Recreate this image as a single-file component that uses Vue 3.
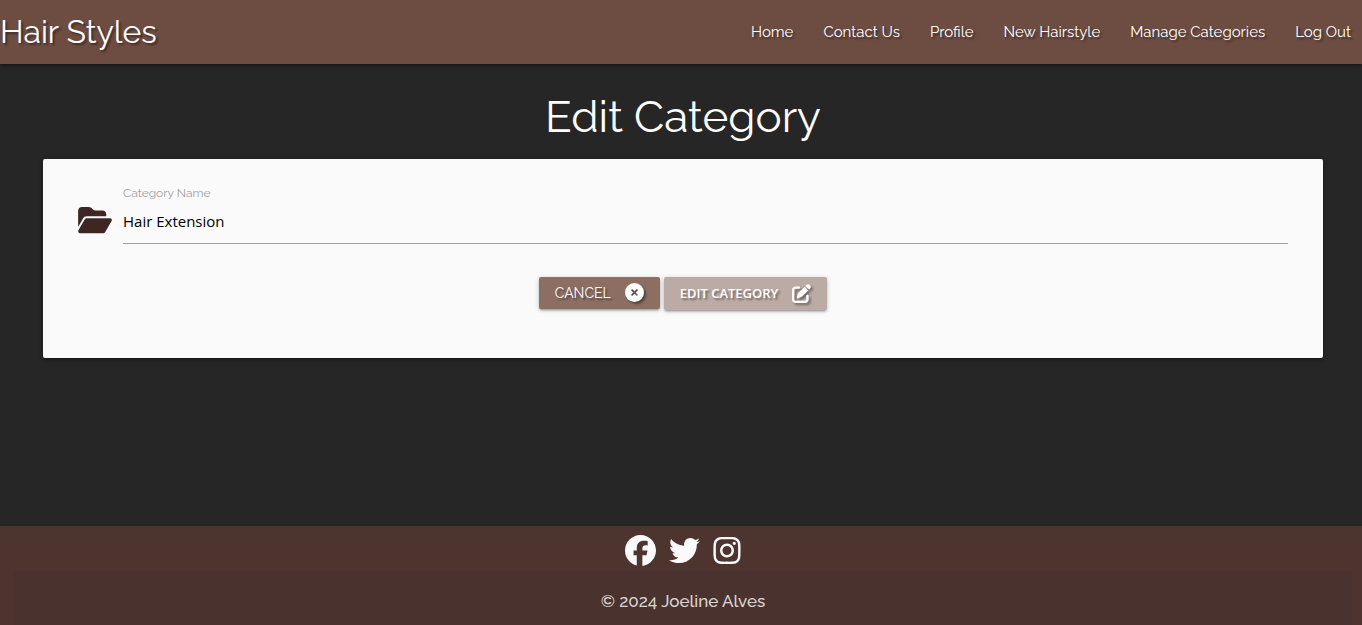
<script setup>
import { ref } from 'vue'

const links = ['Home', 'Contact Us', 'Profile', 'New Hairstyle', 'Manage Categories', 'Log Out']
const categoryName = ref('Hair Extension')

const socials = [
  {
    name: 'Facebook',
    box: '0 0 512 512',
    kind: 'wide',
    path: 'M512 256C512 114.6 397.4 0 256 0S0 114.6 0 256C0 376 82.7 476.8 194.2 504.5V334.2H141.4V256h52.8V222.3c0-87.1 39.4-127.5 125-127.5c16.2 0 44.2 3.2 55.7 6.4V172c-6-.6-16.5-1-29.6-1c-42 0-58.2 15.9-58.2 57.2V256h83.6l-14.4 78.2H287V510.1C413.8 494.8 512 386.9 512 256z',
  },
  {
    name: 'Twitter',
    box: '0 0 512 512',
    kind: 'wide',
    path: 'M459.37 151.716c.325 4.548.325 9.097.325 13.645 0 138.72-105.583 298.558-298.558 298.558-59.452 0-114.68-17.219-161.137-47.106 8.447.974 16.568 1.299 25.34 1.299 49.055 0 94.213-16.568 130.274-44.832-46.132-.975-84.792-31.188-98.112-72.772 6.498.974 12.995 1.624 19.818 1.624 9.421 0 18.843-1.3 27.614-3.573-48.081-9.747-84.143-51.98-84.143-102.985v-1.299c13.969 7.797 30.214 12.67 47.431 13.319-28.264-18.843-46.781-51.005-46.781-87.391 0-19.492 5.197-37.36 14.294-52.954 51.655 63.675 129.3 105.258 216.365 109.807-1.624-7.797-2.599-15.918-2.599-24.04 0-57.828 46.782-104.934 104.934-104.934 30.213 0 57.502 12.67 76.67 33.137 23.715-4.548 46.456-13.32 66.599-25.34-7.798 24.366-24.366 44.833-46.132 57.827 21.117-2.273 41.584-8.122 60.426-16.243-14.292 20.791-32.161 39.308-52.628 54.253z',
  },
  {
    name: 'Instagram',
    box: '0 0 448 512',
    kind: 'narrow',
    path: 'M224.1 141c-63.6 0-114.9 51.3-114.9 114.9s51.3 114.9 114.9 114.9S339 319.5 339 255.9 287.7 141 224.1 141zm0 189.6c-41.1 0-74.7-33.5-74.7-74.7s33.5-74.7 74.7-74.7 74.7 33.5 74.7 74.7-33.6 74.7-74.7 74.7zm146.4-194.3c0 14.9-12 26.8-26.8 26.8-14.9 0-26.8-12-26.8-26.8s12-26.8 26.8-26.8 26.8 12 26.8 26.8zm76.1 27.2c-1.7-35.9-9.9-67.7-36.2-93.9-26.2-26.2-58-34.4-93.9-36.2-37-2.1-147.9-2.1-184.9 0-35.8 1.7-67.6 9.9-93.9 36.1s-34.4 58-36.2 93.9c-2.1 37-2.1 147.9 0 184.9 1.7 35.9 9.9 67.7 36.2 93.9s58 34.4 93.9 36.2c37 2.1 147.9 2.1 184.9 0 35.9-1.7 67.7-9.9 93.9-36.2 26.2-26.2 34.4-58 36.2-93.9 2.1-37 2.1-147.8 0-184.8zM398.8 388c-7.8 19.6-22.9 34.7-42.6 42.6-29.5 11.7-99.5 9-132.1 9s-102.7 2.6-132.1-9c-19.6-7.8-34.7-22.9-42.6-42.6-11.7-29.5-9-99.5-9-132.1s-2.6-102.7 9-132.1c7.8-19.6 22.9-34.7 42.6-42.6 29.5-11.7 99.5-9 132.1-9s102.7-2.6 132.1 9c19.6 7.8 34.7 22.9 42.6 42.6 11.7 29.5 9 99.5 9 132.1s2.7 102.7-9 132.1z',
  },
]
</script>

<template>
  <div class="page">
    <header class="navbar">
      <a href="#" class="brand">Hair Styles</a>
      <nav class="links">
        <a v-for="link in links" :key="link" href="#">{{ link }}</a>
      </nav>
    </header>

    <main class="content">
      <h1>Edit Category</h1>
      <form class="panel" @submit.prevent>
        <div class="field">
          <svg class="folder" viewBox="0 0 576 512" aria-hidden="true">
            <path d="M88.7 223.8L0 375.8V96C0 60.7 28.7 32 64 32H181.5c17 0 33.3 6.7 45.3 18.7l26.5 26.5c12 12 28.3 18.7 45.3 18.7H416c35.3 0 64 28.7 64 64v32H144c-22.8 0-43.8 12.1-55.3 31.8zm27.6 16.1C122.1 230 132.6 224 144 224H544c11.5 0 22 6.1 27.7 16.1s5.7 22.2-.1 32.1l-112 192C453.9 474 443.4 480 432 480H32c-11.5 0-22-6.1-27.7-16.1s-5.7-22.2 .1-32.1l112-192z" />
          </svg>
          <div class="entry">
            <label for="category-name">Category Name</label>
            <input id="category-name" v-model="categoryName" type="text" />
          </div>
        </div>
        <div class="actions">
          <a href="#" class="btn cancel">
            Cancel
            <svg viewBox="0 0 512 512" aria-hidden="true">
              <path d="M256 512A256 256 0 1 0 256 0a256 256 0 1 0 0 512zM175 175c9.4-9.4 24.6-9.4 33.9 0l47 47 47-47c9.4-9.4 24.6-9.4 33.9 0s9.4 24.6 0 33.9l-47 47 47 47c9.4 9.4 9.4 24.6 0 33.9s-24.6 9.4-33.9 0l-47-47-47 47c-9.4 9.4-24.6 9.4-33.9 0s-9.4-24.6 0-33.9l47-47-47-47c-9.4-9.4-9.4-24.6 0-33.9z" />
            </svg>
          </a>
          <button type="submit" class="btn submit">
            Edit Category
            <svg viewBox="0 0 512 512" aria-hidden="true">
              <path d="M471.6 21.7c-21.9-21.9-57.3-21.9-79.2 0L362.3 51.7l97.9 97.9 30.1-30.1c21.9-21.9 21.9-57.3 0-79.2L471.6 21.7zm-299.2 220c-6.1 6.1-10.8 13.6-13.5 21.9l-29.6 88.8c-2.9 8.6-.6 18.1 5.8 24.6s15.9 8.7 24.6 5.8l88.8-29.6c8.2-2.7 15.7-7.4 21.9-13.5L437.7 172.3 339.7 74.3 172.4 241.7zM96 64C43 64 0 107 0 160V416c0 53 43 96 96 96H352c53 0 96-43 96-96V320c0-17.7-14.3-32-32-32s-32 14.3-32 32v96c0 17.7-14.3 32-32 32H96c-17.7 0-32-14.3-32-32V160c0-17.7 14.3-32 32-32h96c17.7 0 32-14.3 32-32s-14.3-32-32-32H96z" />
            </svg>
          </button>
        </div>
      </form>
    </main>

    <footer class="footer">
      <div class="socials">
        <a v-for="item in socials" :key="item.name" href="#" :aria-label="item.name">
          <svg :class="item.kind" :viewBox="item.box" aria-hidden="true"><path :d="item.path" /></svg>
        </a>
      </div>
      <p class="copyright">© 2024 Joeline Alves</p>
    </footer>
  </div>
</template>

<style>
body {
  margin: 0;
  background: #262626;
}
</style>

<style scoped>
.page {
  min-height: 100vh;
  display: flex;
  flex-direction: column;
  background: #262626;
  color: #fff;
  font-family: Raleway, Lato, sans-serif;
}

a {
  color: inherit;
  text-decoration: none;
}

svg {
  display: block;
  fill: currentColor;
}

.navbar {
  display: flex;
  align-items: center;
  justify-content: space-between;
  height: 64px;
  padding-right: 11px;
  background: #6d4c41;
  box-shadow: 0 2px 2px rgba(0, 0, 0, 0.14), 0 3px 1px -2px rgba(0, 0, 0, 0.12), 0 1px 5px rgba(0, 0, 0, 0.2);
  text-shadow: 2px 2px 2px rgba(0, 0, 0, 0.4);
}

.brand {
  font-size: 32px;
  line-height: 64px;
}

.links {
  display: flex;
  gap: 30px;
  font-size: 15px;
  line-height: 64px;
}

.content {
  flex: 1;
  padding: 0 39px 0 43px;
}

h1 {
  margin: 24px 0 14px;
  font-size: 44px;
  line-height: 57px;
  font-weight: 400;
  text-align: center;
}

.panel {
  padding: 25px 35px 48px;
  border-radius: 2px;
  background: #fafafa;
  box-shadow: 0 2px 2px rgba(0, 0, 0, 0.14), 0 3px 1px -2px rgba(0, 0, 0, 0.12), 0 1px 5px rgba(0, 0, 0, 0.2);
}

.field {
  display: flex;
  align-items: flex-end;
  gap: 11px;
}

.folder {
  width: 34px;
  height: 30px;
  margin-bottom: 9px;
  color: #3e2723;
}

.entry {
  flex: 1;
  display: flex;
  flex-direction: column;
}

label {
  font-size: 12px;
  line-height: 18px;
  color: #9e9e9e;
}

input {
  height: 42px;
  padding: 0 0 4px;
  border: 0;
  border-bottom: 1px solid #9e9e9e;
  box-sizing: border-box;
  outline: none;
  background: transparent;
  color: #000;
  font: 15px "Segoe UI", "Open Sans", sans-serif;
}

.actions {
  display: flex;
  justify-content: center;
  align-items: flex-start;
  gap: 4px;
  margin-top: 33px;
}

.btn {
  display: flex;
  align-items: center;
  gap: 14px;
  box-sizing: border-box;
  height: 32px;
  padding: 0 16px 1px;
  border: 0;
  border-radius: 2px;
  color: #fff;
  text-transform: uppercase;
  text-shadow: 2px 2px 2px rgba(0, 0, 0, 0.4);
  box-shadow: 0 2px 2px rgba(0, 0, 0, 0.14), 0 3px 1px -2px rgba(0, 0, 0, 0.12), 0 1px 5px rgba(0, 0, 0, 0.2);
  cursor: pointer;
}

.btn svg {
  width: 19px;
  height: 19px;
  filter: drop-shadow(2px 2px 1px rgba(0, 0, 0, 0.4));
}

.cancel {
  background: #8d6e63;
  font-size: 14px;
}

.submit {
  height: 33px;
  background: #bcaaa4;
  font: 600 13px "Segoe UI", "Open Sans", sans-serif;
}

.footer {
  background: #4e342e;
}

.socials {
  display: flex;
  justify-content: center;
  gap: 13px;
  padding: 9px 0 5px 4px;
  color: #fafafa;
}

.wide {
  width: 31px;
  height: 31px;
}

.narrow {
  width: 28px;
  height: 31px;
}

.copyright {
  margin: 0 10px 0 14px;
  padding-top: 6px;
  background: rgba(51, 51, 51, 0.14);
  color: rgba(255, 255, 255, 0.8);
  font-size: 17px;
  font-weight: 500;
  line-height: 48px;
  text-align: center;
}
</style>
